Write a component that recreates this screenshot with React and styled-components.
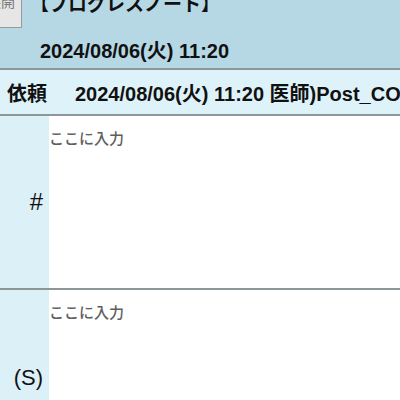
import React from 'react';
import styled, { createGlobalStyle } from 'styled-components';

const GlobalStyle = createGlobalStyle`
  html, body {
    margin: 0;
    padding: 0;
    overflow: hidden;
    background: #ffffff;
  }
  body {
    font-family: "Liberation Sans", "Noto Sans CJK JP", sans-serif;
  }
`;

const Page = styled.div`
  width: 400px;
  overflow: hidden;
`;

const Header = styled.header`
  background: #b6d8e5;
  height: 70px;
  border-bottom: 2px solid #8f9699;
  box-sizing: border-box;
  display: flex;
  flex-direction: column;
`;

const TitleRow = styled.div`
  display: flex;
  align-items: flex-start;
  gap: 8px;
  margin-top: -12px;
`;

const ToggleButton = styled.button`
  flex: none;
  margin-left: -22px;
  width: 44px;
  height: 40px;
  padding: 5px 6px 0 0;
  display: flex;
  align-items: flex-start;
  justify-content: flex-end;
  background: #e6e6e6;
  border: 1px solid #9a9a9a;
  color: #7a7a7a;
  font-family: "Noto Sans CJK JP", sans-serif;
  font-size: 14px;
  line-height: 1;
`;

const Title = styled.h1`
  margin: 5px 0 0 0;
  font-family: "Noto Sans CJK JP", sans-serif;
  font-size: 19px;
  font-weight: 700;
  line-height: 1;
  color: #111;
  white-space: nowrap;
`;

const DateLine = styled.div`
  margin: 11px 0 0 40px;
  font-size: 20px;
  font-weight: 700;
  line-height: 22px;
  color: #111;
  white-space: nowrap;
`;

const RequestRow = styled.div`
  height: 46px;
  box-sizing: border-box;
  background: #def2f9;
  border-bottom: 2px solid #8f9699;
  display: flex;
  align-items: center;
  padding-left: 7px;
  gap: 28px;
  font-size: 20px;
  font-weight: 700;
  color: #111;
  white-space: nowrap;
`;

const Cjk = styled.span`
  font-family: "Noto Sans CJK JP", sans-serif;
`;

const Section = styled.div`
  display: grid;
  grid-template-columns: 49px 1fr;
  height: 174px;
  box-sizing: border-box;
  border-bottom: 2px solid #8f9699;
`;

const Label = styled.div`
  background: #dcf0f8;
  display: flex;
  align-items: center;
  justify-content: flex-end;
  padding-right: 6px;
  padding-top: ${p => p.offset || 0}px;
  font-size: ${p => p.size || 20}px;
  color: #111;
`;

const Entry = styled.textarea`
  border: none;
  outline: none;
  resize: none;
  background: #ffffff;
  margin: 0;
  padding: 11px 0 12px;
  font-family: "Noto Sans CJK JP", sans-serif;
  font-size: 15px;
  font-weight: 500;
  line-height: 22px;
  color: #333;
  &::placeholder {
    color: #5e5e5e;
  }
`;

const sections = [
  { id: 'plan', label: '#', size: 24 },
  { id: 'subjective', label: '(S)', size: 22, offset: 4 },
];

const App = () => (
  <Page>
    <GlobalStyle />
    <Header>
      <TitleRow>
        <ToggleButton>展開</ToggleButton>
        <Title>【プログレスノート】</Title>
      </TitleRow>
      <DateLine>
        2024/08/06(<Cjk>火</Cjk>) 11:20
      </DateLine>
    </Header>
    <RequestRow>
      <Cjk>依頼</Cjk>
      <span>
        2024/08/06(<Cjk>火</Cjk>) 11:20 <Cjk>医師</Cjk>)Post_CO
      </span>
    </RequestRow>
    {sections.map(s => (
      <Section key={s.id}>
        <Label size={s.size} offset={s.offset}>
          {s.label}
        </Label>
        <Entry placeholder="ここに入力" />
      </Section>
    ))}
  </Page>
);

export default App;
